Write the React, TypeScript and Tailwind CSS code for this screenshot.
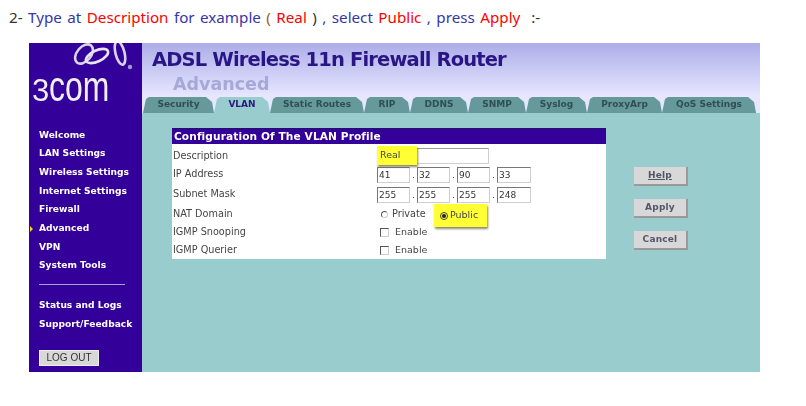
const navTop = ['Welcome', 'LAN Settings', 'Wireless Settings', 'Internet Settings', 'Firewall', 'Advanced', 'VPN', 'System Tools'];
const navBottom = ['Status and Logs', 'Support/Feedback'];
const tabs = [
  { name: 'Security', width: 'w-[71px]' },
  { name: 'VLAN', width: 'w-[56px]' },
  { name: 'Static Routes', width: 'w-[94px]' },
  { name: 'RIP', width: 'w-[46px]' },
  { name: 'DDNS', width: 'w-[58px]' },
  { name: 'SNMP', width: 'w-[58px]' },
  { name: 'Syslog', width: 'w-[61px]' },
  { name: 'ProxyArp', width: 'w-[75px]' },
  { name: 'QoS Settings', width: 'w-[94px]' },
];

function Octets({ values }: { values: string[] }) {
  return (
    <div className="flex items-center">
      {values.map((v, i) => (
        <div key={i} className="flex items-center">
          <div className={`h-[16px] w-[33px] border border-[#cfcfcf] border-t-[#777777] border-l-[#777777] bg-white pl-[1px] text-[9px] leading-[14px] text-[#333333] ${i === 3 ? 'w-[34px]' : ''}`}>{v}</div>
          {i < 3 && <span className="w-[7px] text-center text-[9px] leading-[14px] text-[#444444]">.</span>}
        </div>
      ))}
    </div>
  );
}

function Row({ label, children, height }: { label: string; children?: React.ReactNode; height: string }) {
  return (
    <div className={`flex items-center ${height}`}>
      <div className="w-[205px] pl-[1px] text-[9.7px] text-[#444444]">{label}</div>
      {children}
    </div>
  );
}

function Check() {
  return (
    <div className="ml-[3px] flex items-center">
      <div className="h-[9px] w-[9px] border border-[#cccccc] border-t-[#555555] border-l-[#555555] bg-white" />
      <span className="ml-[6px] text-[9.5px] text-[#444444]">Enable</span>
    </div>
  );
}

function GrayButton({ label, underline }: { label: string; underline?: boolean }) {
  return (
    <div className={`flex h-[19px] w-[54px] items-center justify-center border-r-2 border-b-2 border-[#999999] bg-[#d8d8d8] text-[9px] font-bold tracking-[0.2px] text-[#55556a] ${underline ? 'underline' : ''}`}>
      {label}
    </div>
  );
}

export default function App() {
  return (
    <div className="h-[406px] w-[806px] overflow-hidden bg-white">
      <p className="pl-[9px] pt-[7px] font-['Noto_Sans',sans-serif] text-[15.2px] leading-[20px] text-[#3636a8] whitespace-pre [word-spacing:1.5px]">
        <span className="text-[#333333]">2- </span>Type at <span className="text-[#ff0000]">Description</span> for example <span className="text-[#a05a10]">( </span><span className="text-[#ff0000]">Real</span><span className="text-[#333333]"> ) </span>, select <span className="text-[#ff0000]">Public</span> , press <span className="text-[#ff0000]">Apply</span><span className="text-[#333333]">  :-</span>
      </p>

      <div className="ml-[29px] mt-[16px] flex h-[329px] w-[731px] font-['DejaVu_Sans',sans-serif] blur-[0.4px]">
        {/* sidebar */}
        <div className="flex w-[113px] flex-col bg-[#330099] text-white">
          <div className="relative h-[81px] overflow-hidden">
            <svg className="absolute left-0 top-0" width="113" height="30" viewBox="0 0 113 30" fill="none">
              <ellipse cx="55" cy="11" rx="11" ry="7" stroke="#d8d4e8" strokeWidth="2.6" transform="rotate(-50 55 11)" />
              <ellipse cx="68" cy="13" rx="12" ry="5.5" stroke="#e8e4f0" strokeWidth="2.6" transform="rotate(-25 68 13)" />
              <ellipse cx="91" cy="10" rx="4.5" ry="12" stroke="#d8d4e8" strokeWidth="2.6" transform="rotate(-14 91 10)" />
              <circle cx="101" cy="24" r="2.2" fill="#a898c8" />
            </svg>
            <div className="absolute left-[3px] top-[27px] flex h-[34px] items-baseline font-['Liberation_Sans',sans-serif] text-[#f0eef6]">
              <span className="text-[31px] leading-[34px]">3</span>
              <span className="origin-left scale-x-[0.76] text-[42px] leading-[34px]">com</span>
            </div>
          </div>
          <nav className="mt-[2px] flex flex-col pl-[10px] text-[9.1px] font-bold">
            {navTop.map(item => (
              <div key={item} className="relative flex h-[18.7px] items-center">
                {item === 'Advanced' && <span className="absolute left-[-9px] h-0 w-0 border-y-[3px] border-l-[3px] border-y-transparent border-l-[#ffcc33]" />}
                {item}
              </div>
            ))}
          </nav>
          <div className="ml-[10px] mt-[8px] h-[1px] w-[86px] bg-[#a8a0d8]" />
          <div className="mt-[12px] flex flex-col pl-[10px] text-[9.1px] font-bold">
            {navBottom.map(item => (
              <div key={item} className="flex h-[18.7px] items-center">{item}</div>
            ))}
          </div>
          <div className="ml-[10px] mt-[16px] flex h-[16px] w-[60px] items-center justify-center border border-[#eeeeee] bg-[#d8d8d8] font-['Liberation_Sans',sans-serif] text-[10px] text-[#333333]">LOG OUT</div>
        </div>

        {/* main */}
        <div className="flex flex-1 flex-col bg-[#99cccc]">
          <div className="h-[70px] bg-gradient-to-b from-[#adade8] to-[#e6e6ff] to-[75%]">
            <h1 className="pl-[10px] pt-[4px] text-[19.5px] font-bold leading-[26px] tracking-[-0.85px] text-[#2a1585]">ADSL Wireless 11n Firewall Router</h1>
            <div className="pl-[31px] text-[17.5px] font-bold leading-[22px] text-[#a8a8d8]">Advanced</div>
            <div className="flex items-end pl-[1px] pt-[2px]">
              {tabs.map(t => (
                <div
                  key={t.name}
                  className={`${t.width} flex h-[16px] items-center justify-center text-[9px] font-bold [clip-path:polygon(0_100%,3px_2px,6px_0,calc(100%-8px)_0,calc(100%-2px)_5px,100%_100%)] ${t.name === 'VLAN' ? 'bg-[#99cccc] text-[#2a1a80]' : 'bg-[#669999] text-[#2f4f55]'}`}
                >
                  {t.name}
                </div>
              ))}
            </div>
          </div>

          <div className="flex pl-[30px] pt-[15px]">
            <div className="relative w-[434px]">
              <div className="flex h-[16px] items-center border-t border-[#221166] bg-[#330099] pl-[2px] text-[10.6px] font-bold tracking-[0.1px] text-white">Configuration Of The VLAN Profile</div>
              <div className="flex h-[115px] flex-col bg-white pt-[3px]">
                <Row label="Description" height="h-[18px]">
                  <div className="relative h-[16px] w-[112px] border border-[#cfcfcf] border-t-[#999999] border-l-[#999999] bg-white" />
                </Row>
                <Row label="IP Address" height="h-[20px]"><Octets values={['41', '32', '90', '33']} /></Row>
                <Row label="Subnet Mask" height="h-[21px]"><Octets values={['255', '255', '255', '248']} /></Row>
                <Row label="NAT Domain" height="h-[19px]">
                  <div className="ml-[4px] flex items-center">
                    <div className="h-[7px] w-[7px] rounded-full border border-[#cccccc] border-t-[#555555] border-l-[#555555]" />
                    <span className="ml-[4px] text-[9.7px] text-[#444444]">Private</span>
                  </div>
                </Row>
                <Row label="IGMP Snooping" height="h-[18px]"><Check /></Row>
                <Row label="IGMP Querier" height="h-[18px]"><Check /></Row>
              </div>
              {/* yellow callouts drawn over the form */}
              <div className="absolute left-[205px] top-[18px] flex h-[19px] w-[40px] items-center bg-[#ffff33] pl-[3px] text-[9.5px] text-[#444444] shadow-[1px_2px_2px_rgba(90,90,60,0.7)]">Real</div>
              <div className="absolute left-[262px] top-[76px] flex h-[23px] w-[53px] items-center bg-[#ffff33] pl-[6px] shadow-[1px_2px_2px_rgba(90,90,60,0.7)]">
                <div className="flex h-[8px] w-[8px] items-center justify-center rounded-full border border-[#444444]">
                  <div className="h-[4px] w-[4px] rounded-full bg-[#222222]" />
                </div>
                <span className="ml-[2px] text-[9.5px] text-[#444444]">Public</span>
              </div>
            </div>
            <div className="ml-[28px] flex flex-col gap-[13px] pt-[39px]">
              <GrayButton label="Help" underline />
              <GrayButton label="Apply" />
              <GrayButton label="Cancel" />
            </div>
          </div>
        </div>
      </div>
    </div>
  );
}
